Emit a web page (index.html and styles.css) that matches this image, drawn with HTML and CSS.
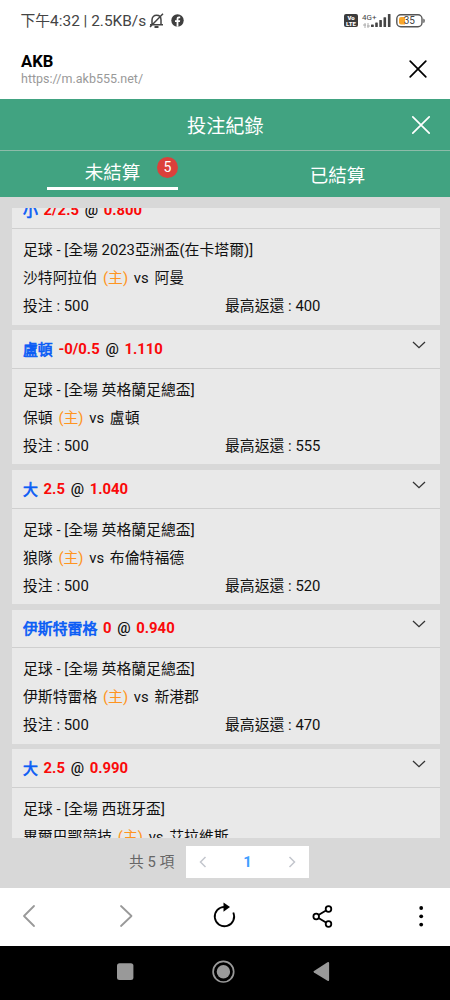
FILE: index.html
```
<!DOCTYPE html>
<html lang="zh-Hant">
<head>
<meta charset="utf-8">
<title>AKB</title>
<link rel="stylesheet" href="styles.css">
</head>
<body>
<div class="status">
  <span class="clock">下午<span class="latin">4:32 | 2.5KB/s</span></span>
  <svg class="bell" width="15" height="16" viewBox="0 0 15 16" fill="none" stroke="#444" stroke-width="1.5"><path d="M3 11.5V7C3 4 5 2.3 7.5 2.3S12 4 12 7v4.500M1 11.800h13M14 .8L1 14"/><path d="M5.500 14h4" stroke-width="2"/></svg>
  <svg class="fb" width="13" height="13" viewBox="0 0 13 13"><circle cx="6.500" cy="6.500" r="6.200" fill="#3f3f3f"/><path d="M5.600 12.800V8H4V6.200h1.600V5c0-1.700.9-2.500 2.400-2.500h1.200v1.700h-.9c-.7 0-.9.300-.9.900v1.100h1.800L8.900 8H7.400v4.800z" fill="#fff"/></svg>
  <span class="volte"><span>Vo</span><span>LTE</span></span>
  <span class="net"><span class="gen">4G+</span><svg width="7" height="5" viewBox="0 0 7 5" fill="none" stroke="#999" stroke-width=".8"><path d="M2 0v5M0 2h3M5 0v5M4 3h3"/></svg></span>
  <svg class="bars" width="20" height="13" viewBox="0 0 20 13" fill="#444"><rect x="0" y="10.500" width="2.800" height="2.500" rx=".6"/><rect x="4.200" y="8.500" width="2.600" height="4.500" rx=".6"/><rect x="8.300" y="6" width="2.600" height="7" rx=".6"/><rect x="12.500" y="3.200" width="2.600" height="9.800" rx=".6"/><rect x="16.900" y="0" width="2.600" height="13" rx=".6"/></svg>
  <svg class="battery" width="30" height="14" viewBox="0 0 30 14"><rect x=".8" y=".8" width="25.200" height="12" rx="4" fill="#fff" stroke="#555" stroke-width="1.400"/><path d="M5 3h4v7.600H5a2 2 0 0 1-2-2V5a2 2 0 0 1 2-2z" fill="#f9a72b"/><path d="M27.300 4.500q1.500.2 1.500 2.300t-1.500 2.300z" fill="#555"/><text x="13.300" y="10.300" text-anchor="middle" class="pct">35</text></svg>
</div>
<div class="sitebar">
  <div class="site"><div class="name">AKB</div><div class="url">https://m.akb555.net/</div></div>
  <svg width="18" height="18" viewBox="0 0 18 18" fill="none" stroke="#000" stroke-width="1.700" stroke-linecap="round"><path d="M1.200 1.200l15.600 15.600M16.800 1.200L1.200 16.800"/></svg>
</div>
<div class="title"><span>投注紀錄</span>
  <svg width="20" height="20" viewBox="0 0 20 20" fill="none" stroke="#fff" stroke-width="1.700" stroke-linecap="round"><path d="M1.800 1.800l16.400 16.400M18.200 1.800L1.800 18.200"/></svg>
</div>
<div class="tabs">
  <div class="tab"><div class="active">未結算<span class="badge">5</span></div></div>
  <div class="tab other">已結算</div>
</div>
<div class="content">
  <div class="list">
    <div class="cards">
      <div class="card">
        <div class="head"><span class="pick">小</span><b>2/2.5</b><i>@</i><b>0.800</b></div>
        <div class="body"><p>足球 - [全場 2023亞洲盃(在卡塔爾)]</p><p class="match"><span>沙特阿拉伯</span><span class="home">(主)</span><span>vs</span><span>阿曼</span></p><p class="stake"><span>投注 : 500</span><span>最高返還 : 400</span></p></div>
      </div>
      <div class="card">
        <div class="head"><span class="pick">盧頓</span><b>-0/0.5</b><i>@</i><b>1.110</b><svg class="chev" viewBox="0 0 14 8"><path d="M1 1l6 5.700L13 1"/></svg></div>
        <div class="body"><p>足球 - [全場 英格蘭足總盃]</p><p class="match"><span>保頓</span><span class="home">(主)</span><span>vs</span><span>盧頓</span></p><p class="stake"><span>投注 : 500</span><span>最高返還 : 555</span></p></div>
      </div>
      <div class="card">
        <div class="head"><span class="pick">大</span><b>2.5</b><i>@</i><b>1.040</b><svg class="chev" viewBox="0 0 14 8"><path d="M1 1l6 5.700L13 1"/></svg></div>
        <div class="body"><p>足球 - [全場 英格蘭足總盃]</p><p class="match"><span>狼隊</span><span class="home">(主)</span><span>vs</span><span>布倫特福德</span></p><p class="stake"><span>投注 : 500</span><span>最高返還 : 520</span></p></div>
      </div>
      <div class="card">
        <div class="head"><span class="pick">伊斯特雷格</span><b>0</b><i>@</i><b>0.940</b><svg class="chev" viewBox="0 0 14 8"><path d="M1 1l6 5.700L13 1"/></svg></div>
        <div class="body"><p>足球 - [全場 英格蘭足總盃]</p><p class="match"><span>伊斯特雷格</span><span class="home">(主)</span><span>vs</span><span>新港郡</span></p><p class="stake"><span>投注 : 500</span><span>最高返還 : 470</span></p></div>
      </div>
      <div class="card">
        <div class="head"><span class="pick">大</span><b>2.5</b><i>@</i><b>0.990</b><svg class="chev" viewBox="0 0 14 8"><path d="M1 1l6 5.700L13 1"/></svg></div>
        <div class="body"><p>足球 - [全場 西班牙盃]</p><p class="match"><span>畢爾巴鄂競技</span><span class="home">(主)</span><span>vs</span><span>艾拉維斯</span></p></div>
      </div>
    </div>
  </div>
  <div class="pager">
    <span class="total">共 5 項</span>
    <div class="pages">
      <svg width="8" height="12" viewBox="0 0 8 12"><path d="M6.500 1L1.500 6l5 5"/></svg>
      <span>1</span>
      <svg width="8" height="12" viewBox="0 0 8 12"><path d="M1.500 1l5 5-5 5"/></svg>
    </div>
  </div>
</div>
<div class="tools">
  <svg viewBox="0 0 450 57" fill="none" stroke="#000" stroke-width="1.800">
    <path d="M34 18L24 28l10 10M121 18l10.500 10L121 38" stroke="#999" stroke-linecap="round" stroke-linejoin="round"/>
    <path d="M224.500 18.800a9.700 9.700 0 1 0 8.800 5.700"/>
    <path d="M223.500 14.500l6.500 4.600-6.500 4.600z" fill="#000" stroke="none"/>
    <path d="M318.500 27l7.500-4.600M318.500 30l7.500 4.600"/><circle cx="316.200" cy="28.500" r="2.800"/><circle cx="328.500" cy="21" r="2.800"/><circle cx="328.500" cy="36" r="2.800"/>
    <g fill="#000" stroke="none"><circle cx="421.200" cy="20" r="1.900"/><circle cx="421.200" cy="28.300" r="1.900"/><circle cx="421.200" cy="36.600" r="1.900"/></g>
  </svg>
</div>
<div class="nav">
  <svg viewBox="0 0 450 54" fill="#999"><rect x="117" y="17.200" width="16.400" height="16.800" rx="2.500"/><circle cx="223.400" cy="25.700" r="10.300" fill="none" stroke="#999" stroke-width="1.700"/><circle cx="223.400" cy="25.700" r="6.700"/><path d="M314 24.900L327.500 16.300q1.600-.9 1.600 1V33.700q0 1.900-1.600 1L314 26.600q-1.200-.9 0-1.700z"/></svg>
</div>
</body>
</html>
```
FILE: styles.css
```
* { box-sizing: border-box; }
body {
  margin: 0;
  width: 450px;
  height: 1000px;
  overflow: hidden;
  display: flex;
  flex-direction: column;
  background: #fff;
  color: #111;
  font-family: Roboto, "Noto Sans CJK TC", sans-serif;
  font-size: 14.87px;
}
p { margin: 0; }
svg { flex: none; display: block; }
.status {
  flex: none;
  height: 41px;
  padding: 0 25px 0 20.5px;
  display: flex;
  align-items: center;
  color: #444;
}
.clock { font-size: 14.8px; white-space: nowrap; line-height: 20px; padding-top: 1px; }
.latin { font-size: 15.4px; }
.bell { margin-left: 3px; }
.fb { margin-left: 7px; }
.volte {
  margin-left: auto;
  width: 14px;
  height: 13px;
  border-radius: 2px;
  background: #3c3c3c;
  color: #fff;
  font-size: 6px;
  line-height: 5.5px;
  font-weight: 900;
  text-align: center;
  display: flex;
  flex-direction: column;
  justify-content: center;
}
.net { width: 18px; height: 14px; margin-left: 4px; display: flex; flex-direction: column; align-items: flex-start; gap: 2px; }
.net svg { margin-left: 1px; }
.gen { font-size: 8px; line-height: 7px; }
.bars { margin-left: -9px; }
.battery { margin-left: 5px; margin-right: -1px; }
.pct { font-size: 10px; fill: #444; }
.sitebar {
  flex: none;
  height: 58px;
  padding: 0 23px 3px 21px;
  display: flex;
  align-items: center;
  justify-content: space-between;
}
.site { padding-top: 2px; }
.name { color: #000; font-size: 16.6px; font-weight: 700; line-height: 19px; }
.url { color: #999; font-size: 12.5px; line-height: 16px; }
.title {
  flex: none;
  height: 52px;
  padding: 0 19px 0 187px;
  display: flex;
  align-items: center;
  justify-content: space-between;
  background: #41a381;
  border-bottom: 1px solid #8dbba9;
  color: #fff;
  font-size: 19.2px;
}
.tabs { flex: none; height: 46px; display: flex; background: #41a381; color: #fff; font-size: 18.5px; }
.tab { width: 225px; display: flex; justify-content: center; }
.active {
  position: relative;
  width: 131px;
  height: 39px;
  border-bottom: 3px solid #fff;
  text-align: center;
  line-height: 44px;
}
.other { line-height: 50px; }
.badge {
  position: absolute;
  top: 6px;
  right: 0;
  width: 21px;
  height: 21px;
  border-radius: 50%;
  background: #dc403b;
  font-size: 14px;
  line-height: 21px;
}
.content { flex: none; height: 691px; background: #d8d8d8; padding: 11px 10.5px 0 12px; }
.list { height: 629.5px; overflow: hidden; }
.cards { margin-top: -17.2px; display: flex; flex-direction: column; gap: 5.67px; }
.card { flex: none; height: 134px; background: #e9e9e9; }
.head {
  height: 38.4px;
  padding: 0 14px 0 11px;
  border-bottom: 1px solid #cfcfcf;
  display: flex;
  align-items: center;
  gap: 5.7px;
  white-space: nowrap;
}
.head b { color: #fa0a0a; font-weight: 700; }
.head i { font-style: normal; font-weight: 500; }
.pick { color: #0b5df5; -webkit-text-stroke: .7px #0b5df5; margin-top: -1px; }
.chev { width: 14px; height: 8px; margin: -8px 0 0 auto; fill: none; stroke: #333; stroke-width: 1.3; }
.body { padding: 7px 11px 0; line-height: 28px; white-space: nowrap; }
.match { display: flex; gap: 5.7px; }
.stake { display: flex; }
.stake span:first-child { width: 202px; }
.home { color: #ff9420; }
.pager { height: 48px; display: flex; align-items: center; padding-left: 117px; }
.total { width: 57px; color: #666; font-size: 14.8px; margin-top: -2px; white-space: nowrap; }
.pages {
  width: 123px;
  height: 32px;
  padding: 0 13px;
  background: #fff;
  display: flex;
  align-items: center;
  justify-content: space-between;
  color: #409eff;
  font-weight: 700;
}
.pages svg { fill: none; stroke: #c3c6cd; stroke-width: 1.5; }
.tools { flex: none; height: 58px; }
.nav { flex: none; height: 54px; background: #000; }
.tools svg, .nav svg { width: 450px; }
```
